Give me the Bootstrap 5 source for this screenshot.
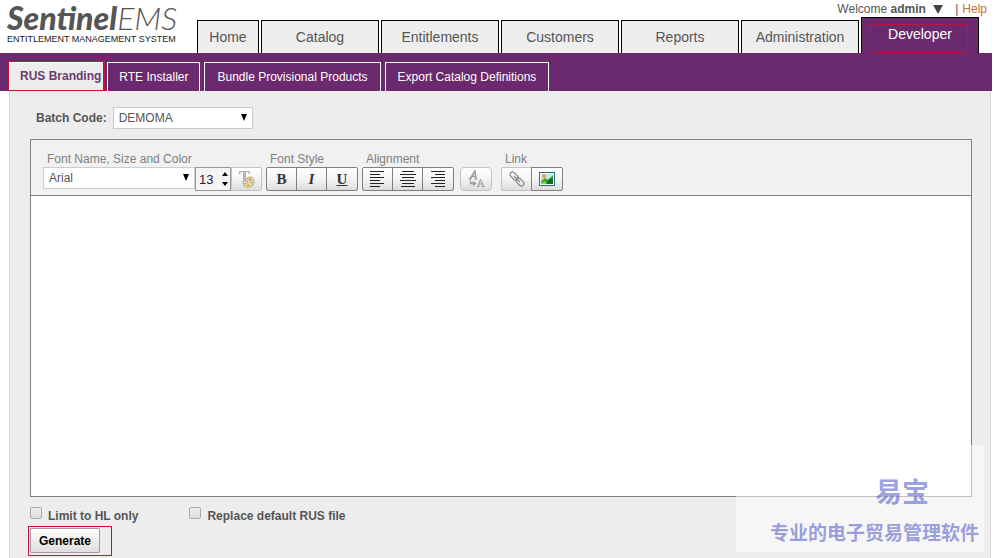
<!DOCTYPE html>
<html lang="en">
<head>
<meta charset="utf-8">
<meta name="viewport" content="width=device-width, initial-scale=1">
<title>Sentinel EMS - RUS Branding</title>
<link href="https://cdn.jsdelivr.net/npm/bootstrap@5.3.0/dist/css/bootstrap.min.css" rel="stylesheet">
<style>
body{font-family:"Liberation Sans",Arial,sans-serif;font-size:12px;line-height:16px;color:#555;background:#fff;padding-right:2px}
a{text-decoration:none}
/* header */
.brand{width:197px;padding:3px 0 0 7px;color:#555}
.brand-name{font-family:Lato,sans-serif;font-size:32px;line-height:30px;white-space:nowrap;font-style:italic}
.brand-name b{font-weight:900}
.brand-name i{font-weight:300}
.brand-line{font-size:9px;line-height:12px;color:#222;white-space:nowrap}
.user-row{height:17px;line-height:18px;padding-right:5px}
.user-row a{color:#c9702f}
.user-row button{font-size:12px;line-height:18px;color:#555}
.caret{width:10px;height:9px;fill:#444}
.main-tabs{gap:2px;padding-right:13px}
.main-tabs a{flex:1 1 0;height:33px;line-height:32px;font-size:14px;text-align:center;color:#555;background:#eee;border:1px solid #000;border-bottom:0}
.main-tabs a.home-tab{flex:0 0 62px}
.main-tabs a.on{height:36px;background:#6b2a6d;color:#fff}
.outline{position:absolute;border:1px solid #c41230;pointer-events:none}
.o-dev{inset:6px 10px 0 7px}
/* second level */
.sub-bar{background:#6b2a6d;padding:9px 0 0 9px;gap:4px;height:38px}
.sub-bar a{border:1px solid #fff;border-bottom:0;color:#fff;padding:0 12px;line-height:28px;font-size:12px;white-space:nowrap}
.sub-bar a.on{background:#ededed;color:#6b3b6b;font-weight:700;margin-right:-2px;padding:0 3px 0 10px;line-height:26px}
.sub-bar a.snug{padding:0 11px}
.o-rus{inset:-2px -1px 0 -2px;border-right-width:2px}
/* page */
.sheet{margin-left:9px;margin-right:1px;background:#ededed;border-left:1px solid #d4d4d4;border-right:1px solid #d4d4d4;padding:16px 18px 5px 20px}
.pick{position:relative}
.pick select{appearance:none;border:1px solid #ccc;border-radius:0;background:#fff;color:#555;width:100%;height:22px;font-size:12px;padding:0 5px;display:block}
.pick::after{content:"";position:absolute;right:6px;top:7px;border:solid transparent;border-width:7px 3px 0;border-top-color:#000;pointer-events:none}
.batch{padding-left:6px;gap:6px}
.batch .pick{width:140px}
.editor{margin-top:10px;border:1px solid #808080}
.tools{background:#f1f1f1;border-bottom:1px solid #808080;height:56px;padding:12px 12px 0}
.tools h2{font-size:12px;line-height:15px;font-weight:400;margin:0 0 0 4px;color:#808080;white-space:nowrap}
.tools .pick{width:152px}
.fonts{width:219px}
.fonts .pick,.size{flex-shrink:0}
.size{width:36px;height:24px;border:1px solid #999;background:#f4f4f4}
.size input{width:21px;height:22px;border:0;padding:0 0 0 3px;font-size:13px;color:#202040;background:transparent;appearance:textfield}
.size input::-webkit-inner-spin-button{display:none}
.size svg{width:8px;height:16px;margin:3px 0 0 4px}
.tool{width:31px;height:24px;margin-right:-1px;padding:0;border:1px solid #808080;background:linear-gradient(#fff,#f4f4f4 50%,#dcdcdc);display:flex;align-items:center;justify-content:center;font:700 15px "Liberation Serif",serif;color:#333}
.tool:first-child{border-radius:2px 0 0 2px}
.tool:last-child{border-radius:0 2px 2px 0;width:32px;margin-right:0}
.tool.dim{border-color:#c4c4c4}
.tool svg{width:18px;height:18px}
.case{padding-top:15px;margin:0 9px 0 6px}
.canvas{border:0;border-radius:0;resize:none;background:#fff;min-height:120px;outline-offset:-2px}
.options{padding-top:10px;gap:51px}
.options label{font-weight:700;line-height:18px}
.options input{appearance:none;width:12px;height:12px;border:1px solid #aaa;border-radius:2px;background:linear-gradient(#eee,#ddd);margin:0 6px 0 0}
.options input:checked{background:#6b2a6d}
.gen{position:relative;margin-top:3px;width:max-content}
.gen button{border:1px solid #999cae;border-radius:1px;background:linear-gradient(#fdfdfd,#dedede);font-size:12px;font-weight:700;color:#000;height:25px;width:70px;padding:0}
.o-gen{inset:-2px -12px -3px -2px}
.stamp{position:absolute;right:10px;bottom:6px;width:248px;height:107px;background:rgba(255,255,255,.5);font-family:"Noto Sans CJK SC",sans-serif;font-weight:700;color:rgba(90,100,205,.62);text-align:right;padding:28px 5px 0 0;pointer-events:none;white-space:nowrap}
.stamp p{margin:0;font-size:19px;line-height:28px}
.stamp .stamp-name{font-size:27px;line-height:36px;padding-right:50px;margin-bottom:9px}
</style>
<script src="https://cdn.jsdelivr.net/npm/bootstrap@5.3.0/dist/js/bootstrap.bundle.min.js"></script>
</head>
<body class="d-flex flex-column min-vh-100 position-relative">
<header class="d-flex">
  <div class="brand flex-shrink-0">
    <div class="brand-name"><b>Sentinel</b><i>EMS</i></div>
    <div class="brand-line">ENTITLEMENT MANAGEMENT SYSTEM</div>
  </div>
  <div class="flex-grow-1">
    <div class="user-row d-flex justify-content-end">
      <button type="button" class="border-0 bg-transparent p-0 me-2">Welcome <b>admin</b> <svg class="caret ms-1 me-1" viewBox="0 0 10 9"><path d="M0 0H10L5 9Z"/></svg></button>
      <span class="me-1">|</span><a href="#">Help</a>
    </div>
    <nav class="main-tabs d-flex align-items-end" aria-label="Main">
      <a class="home-tab" href="#">Home</a>
      <a href="#">Catalog</a>
      <a href="#">Entitlements</a>
      <a href="#">Customers</a>
      <a href="#">Reports</a>
      <a href="#">Administration</a>
      <a class="on position-relative" href="#" aria-current="page">Developer<span class="outline o-dev"></span></a>
    </nav>
  </div>
</header>
<nav class="sub-bar d-flex" aria-label="Developer">
  <a class="on position-relative" href="#" aria-current="page">RUS Branding<span class="outline o-rus"></span></a>
  <a class="snug" href="#">RTE Installer</a>
  <a href="#">Bundle Provisional Products</a>
  <a href="#">Export Catalog Definitions</a>
</nav>
<main class="sheet d-flex flex-column flex-grow-1">
  <div class="batch d-flex align-items-center">
    <label class="fw-bold" for="batch">Batch Code:</label>
    <div class="pick"><select id="batch"><option>DEMOMA</option></select></div>
  </div>
  <section class="editor d-flex flex-column flex-grow-1" aria-label="Editor">
    <div class="tools d-flex">
      <div class="fonts me-1">
        <h2>Font Name, Size and Color</h2>
        <div class="d-flex">
          <div class="pick"><select aria-label="Font name"><option>Arial</option></select></div>
          <div class="size d-flex"><input type="number" value="13" aria-label="Font size"><svg viewBox="0 0 8 16"><path d="M1 5H7L4 1ZM1 11H7L4 15Z"/></svg></div>
          <button type="button" class="tool dim" aria-label="Font color"><svg viewBox="0 0 18 18"><path d="M1 1H12V4H11Q11 2 9 2H8V11L9 12H4L5 11V2H4Q2 2 2 4H1Z" fill="#b5b5ac"/><path d="M9 8Q15 5 16 11Q16 17 10 17Q5 17 5 13Q8 15 10 12Q8 11 9 8Z" fill="#e9dca9" stroke="#b6a778"/><circle cx="12" cy="9.500" r="1.200" fill="#cc8f80"/><circle cx="13.500" cy="12.500" r="1.100" fill="#96b58b"/><circle cx="10" cy="15" r="1.200" fill="#d8b85e"/></svg></button>
        </div>
      </div>
      <div class="me-1">
        <h2>Font Style</h2>
        <div class="d-flex">
          <button type="button" class="tool">B</button>
          <button type="button" class="tool"><i>I</i></button>
          <button type="button" class="tool"><u>U</u></button>
        </div>
      </div>
      <div>
        <h2>Alignment</h2>
        <div class="d-flex">
          <button type="button" class="tool" aria-label="Align left"><svg viewBox="0 0 18 18"><path d="M1 1.500H15M1 4.500H11M1 7.500H15M1 10.500H11M1 13.500H15M1 16.500H11" stroke="#222"/></svg></button>
          <button type="button" class="tool" aria-label="Align center"><svg viewBox="0 0 18 18"><path d="M3 1.500H15M1 4.500H17M3 7.500H15M1 10.500H17M3 13.500H15M2 16.500H16" stroke="#222"/></svg></button>
          <button type="button" class="tool" aria-label="Align right"><svg viewBox="0 0 18 18"><path d="M2 1.500H16M6 4.500H16M2 7.500H16M6 10.500H16M2 13.500H16M6 16.500H16" stroke="#222"/></svg></button>
        </div>
      </div>
      <div class="case">
        <button type="button" class="tool dim rounded-1" aria-label="Change case"><svg viewBox="0 0 18 18" fill="none" stroke="#999"><path d="M3 9L8 1L9 9M5 6.500H9" stroke-width="1.500"/><path d="M1.500 9H4.500M7.500 9H10.500"/><path d="M3.500 10.500V13.500H8M6 11.500L8.500 13.500L6 15.500" stroke-width="1.300"/><path d="M11 16.500L13.500 9.500L16.500 16.500M12 14H15.500M10 16.500H12.500M15 16.500H17.500"/></svg></button>
      </div>
      <div>
        <h2>Link</h2>
        <div class="d-flex">
          <button type="button" class="tool dim" aria-label="Insert link"><svg viewBox="0 0 18 18" fill="none" stroke="#8c8c8c" stroke-width="1.300"><rect x="1.500" y="3.500" width="9" height="5" rx="2.500" transform="rotate(45 6 6)"/><rect x="7.500" y="9.500" width="9" height="5" rx="2.500" transform="rotate(45 12 12)"/><path d="M6 6L12 12"/></svg></button>
          <button type="button" class="tool" aria-label="Insert image"><svg viewBox="0 0 18 18"><rect x="1.500" y="2.500" width="15" height="13" fill="#fff" stroke="#276f8f"/><path d="M3 4H15V14H3Z" fill="#bfe7f5"/><circle cx="6" cy="6" r="2" fill="#f0a428"/><path d="M3 11L7 8L10 10L15 5V14H3Z" fill="#3bab29"/><path d="M8 14L11 9L15 8V14Z" fill="#146d20"/><path d="M3 13Q7 10 9 14H3Z" fill="#8bdc37"/></svg></button>
        </div>
      </div>
    </div>
    <textarea class="canvas flex-grow-1 w-100" aria-label="Branding text"></textarea>
  </section>
  <div class="options d-flex">
    <label class="d-flex"><input type="checkbox">Limit to HL only</label>
    <label class="d-flex"><input type="checkbox">Replace default RUS file</label>
  </div>
  <div class="gen"><button type="button">Generate</button><span class="outline o-gen"></span></div>
</main>
<aside class="stamp" lang="zh"><p class="stamp-name">易宝</p><p>专业的电子贸易管理软件</p></aside>
</body>
</html>
